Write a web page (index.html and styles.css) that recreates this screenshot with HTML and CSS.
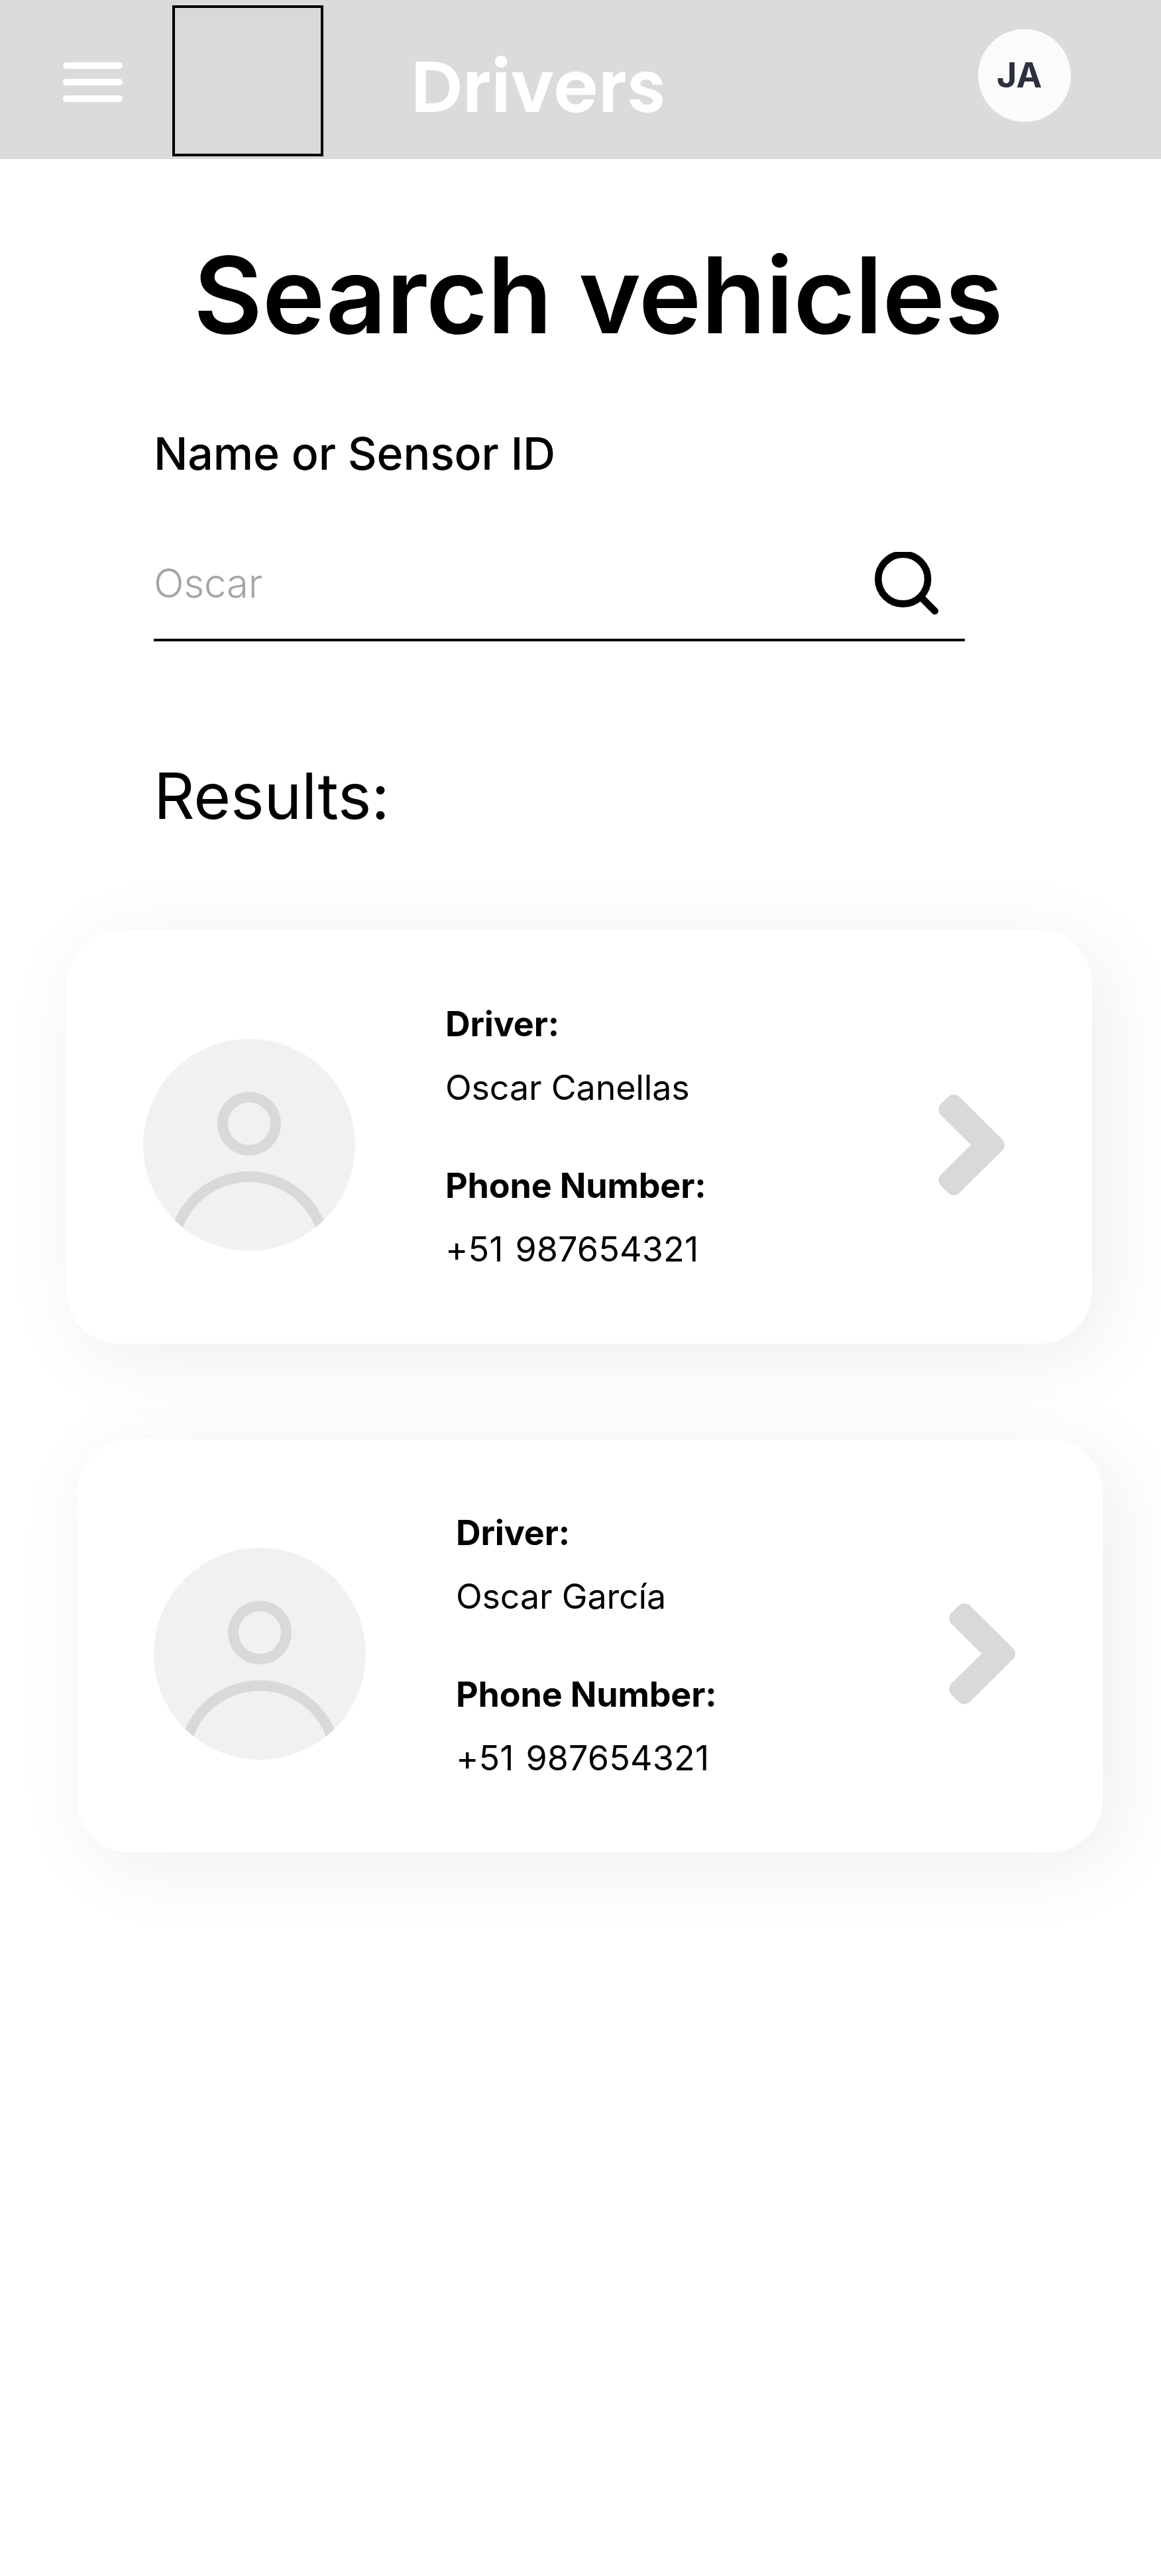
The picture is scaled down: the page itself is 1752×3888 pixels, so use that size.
FILE: index.html
```html
<!DOCTYPE html>
<html lang="en">
<head>
<meta charset="utf-8">
<title>Drivers</title>
<link rel="stylesheet" href="styles.css">
</head>
<body>
<header class="topbar">
  <button class="menu" aria-label="Menu"><span></span><span></span><span></span></button>
  <div class="logo"></div>
  <div class="topbar-title">Drivers</div>
  <div class="user">JA</div>
</header>
<main class="page">
  <h1 class="title">Search vehicles</h1>
  <label class="label">Name or Sensor ID</label>
  <div class="search">
    <span class="query">Oscar</span>
    <svg class="search-icon" width="96" height="95" viewBox="0 0 96 95" fill="none" stroke="#000" stroke-width="10.6" stroke-linecap="round">
      <circle cx="42.7" cy="41" r="37.4"/>
      <path d="M70 68.500L90.700 89.200"/>
    </svg>
  </div>
  <h2 class="results-title">Results:</h2>
  <div class="results">
    <article class="card">
      <svg class="avatar" width="320" height="320" viewBox="0 0 320 320">
        <clipPath id="round-a"><circle cx="160" cy="160" r="160"/></clipPath>
        <circle cx="160" cy="160" r="160" fill="#f1f1f1"/>
        <g clip-path="url(#round-a)" fill="none" stroke="#d9d9d9" stroke-width="16">
          <circle cx="160" cy="128" r="40"/>
          <circle cx="160" cy="323" r="115"/>
        </g>
      </svg>
      <dl class="info">
        <dt>Driver:</dt>
        <dd>Oscar Canellas</dd>
        <dt>Phone Number:</dt>
        <dd class="phone">+51 987654321</dd>
      </dl>
      <svg class="chevron" width="100" height="152" viewBox="0 0 100 152">
        <path d="M23.400 12L88 76L23.400 140L12.300 129.300L66.300 76L12.300 22.700Z" fill="#d9d9d9" stroke="#d9d9d9" stroke-width="24" stroke-linejoin="round"/>
      </svg>
    </article>
    <article class="card card-shifted">
      <svg class="avatar" width="320" height="320" viewBox="0 0 320 320">
        <clipPath id="round-b"><circle cx="160" cy="160" r="160"/></clipPath>
        <circle cx="160" cy="160" r="160" fill="#f1f1f1"/>
        <g clip-path="url(#round-b)" fill="none" stroke="#d9d9d9" stroke-width="16">
          <circle cx="160" cy="128" r="40"/>
          <circle cx="160" cy="323" r="115"/>
        </g>
      </svg>
      <dl class="info">
        <dt>Driver:</dt>
        <dd>Oscar García</dd>
        <dt>Phone Number:</dt>
        <dd class="phone">+51 987654321</dd>
      </dl>
      <svg class="chevron" width="100" height="152" viewBox="0 0 100 152">
        <path d="M23.400 12L88 76L23.400 140L12.300 129.300L66.300 76L12.300 22.700Z" fill="#d9d9d9" stroke="#d9d9d9" stroke-width="24" stroke-linejoin="round"/>
      </svg>
    </article>
  </div>
</main>
</body>
</html>
```
FILE: styles.css
```css
* { box-sizing: border-box; margin: 0; padding: 0; }

body {
  width: 1752px;
  min-height: 3888px;
  background: #fff;
  color: #000;
  font-family: Inter, "Liberation Sans", sans-serif;
  overflow-x: hidden;
}

svg { display: block; flex: none; }

.topbar {
  display: flex;
  align-items: flex-start;
  height: 240px;
  background: #dbdbdb;
}

.menu {
  display: flex;
  flex-direction: column;
  gap: 15px;
  width: 90px;
  margin: 94px 0 0 95px;
  border: 0;
  background: none;
}

.menu span { height: 10px; border-radius: 5px; background: #fff; }

.logo {
  width: 228px;
  height: 228px;
  margin: 8px 0 0 75px;
  border: 4px solid #000;
  background: #d9d9d9;
}

.topbar-title {
  width: 856px;
  margin: 70px 0 0 132px;
  color: #fff;
  font-family: Poppins, Inter, sans-serif;
  font-size: 108px;
  font-weight: 600;
  line-height: 124px;
}

.user {
  width: 140px;
  height: 140px;
  margin-top: 44px;
  padding-left: 28px;
  border-radius: 50%;
  background: #fbfbfb;
  color: #2d303d;
  font-size: 52px;
  font-weight: 700;
  line-height: 139px;
}

.title {
  margin: 108px 0 0 292px;
  font-size: 160px;
  font-weight: 600;
  letter-spacing: -0.35px;
  line-height: 194px;
  white-space: nowrap;
}

.label {
  display: block;
  margin: 101px 0 0 232px;
  font-size: 68px;
  font-weight: 500;
  letter-spacing: -0.15px;
  line-height: 82px;
}

.search {
  display: flex;
  justify-content: space-between;
  width: 1224px;
  height: 135px;
  margin: 108px 0 0 232px;
  padding-right: 40px;
  border-bottom: 4px solid #000;
}

.query {
  margin-top: 11px;
  color: #a5a5a5;
  font-size: 60px;
  font-weight: 300;
  letter-spacing: -0.2px;
  line-height: 73px;
}

.results-title {
  margin: 175px 0 0 232px;
  font-size: 96px;
  font-weight: 400;
  letter-spacing: -0.2px;
  line-height: 116px;
}

.results {
  display: flex;
  flex-direction: column;
  gap: 144px;
  margin: 145px 0 0 100px;
}

.card {
  display: flex;
  align-items: flex-start;
  width: 1548px;
  height: 624px;
  padding-left: 116px;
  border-radius: 80px;
  background: #fff;
  box-shadow: 20px 20px 120px rgba(0, 0, 0, 0.07);
}

.card-shifted { margin-left: 16px; }

.avatar { margin-top: 164px; }

.info {
  width: 744px;
  margin: 110px 0 0 136px;
  font-size: 52px;
}

.info dt { font-weight: 700; letter-spacing: -0.15px; line-height: 64px; }
.info dd { margin: 32px 0 84px; font-weight: 400; letter-spacing: -0.17px; line-height: 64px; }
.info dd:last-child { margin-bottom: 0; }
.info .phone { letter-spacing: 0.15px; word-spacing: 3px; }

.chevron { margin-top: 248px; }
```
